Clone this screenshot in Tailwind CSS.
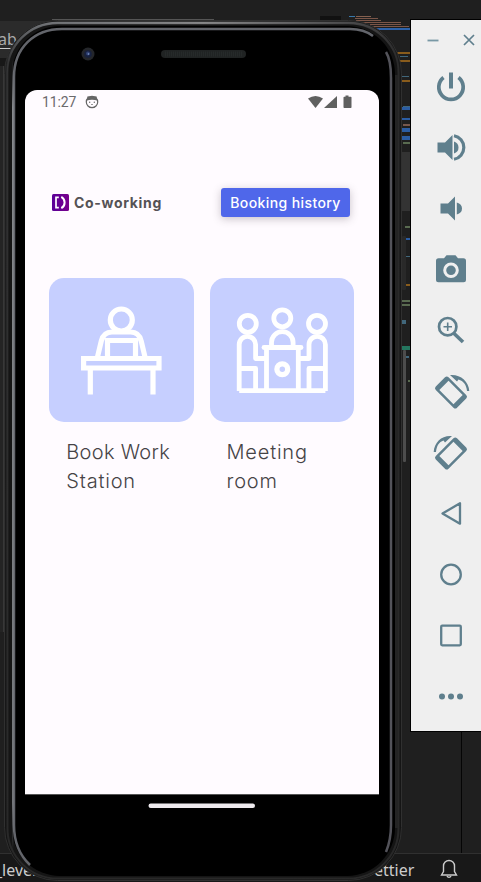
<!DOCTYPE html>
<html lang="en">
<head>
<meta charset="utf-8">
<meta name="viewport" content="width=device-width">
<title>Co-working</title>
<script src="https://cdn.jsdelivr.net/npm/@tailwindcss/browser@4"></script>
</head>
<body class="bg-[#1f1f1f]">
<main class="relative h-[882px] w-[481px] overflow-hidden bg-[#1f1f1f] font-['Inter',sans-serif]">

  <!-- editor behind the emulator -->
  <svg class="absolute inset-0" width="481" height="882" viewBox="0 0 481 882" shape-rendering="crispEdges">
    <rect y="21" width="60" height="37" fill="#2b2b2b"/>
    <rect y="58" width="12" height="8" fill="#181818"/>
    <rect y="66" width="4" height="566" fill="#242424"/>
    <rect x="3" y="66" width="1" height="566" fill="#383838"/>
    <rect x="52" y="19" width="162" height="1" fill="#555"/>
    <rect x="320" y="16" width="21" height="5" fill="#111"/>
    <rect x="349" y="16" width="6" height="1" fill="#3977a8"/><rect x="356" y="16" width="15" height="1" fill="#85604f"/>
    <g fill="#7b5648"><rect x="355" y="18" width="23" height="1"/><rect x="356" y="20" width="25" height="1"/><rect x="362" y="22" width="39" height="1"/><rect x="370" y="24" width="31" height="1"/><rect x="372" y="26" width="37" height="1"/></g>
    <rect x="374" y="28" width="36" height="2" fill="#2d63ab"/>
    <g fill="#895c1c"><rect x="396" y="52" width="14" height="2"/><rect x="398" y="60" width="12" height="2"/><rect x="400" y="80" width="10" height="2"/><rect x="406" y="284" width="4" height="2"/></g>
    <g fill="#41677b"><rect x="400" y="56" width="8" height="1"/><rect x="401" y="76" width="8" height="1"/><rect x="403" y="106" width="7" height="1"/><rect x="406" y="256" width="4" height="1"/><rect x="402" y="320" width="4" height="4"/><rect x="406" y="356" width="3" height="2"/></g>
    <g fill="#2b5da3"><rect x="402" y="107" width="8" height="3"/><rect x="402" y="118" width="8" height="2"/><rect x="402" y="128" width="8" height="4"/><rect x="402" y="136" width="8" height="4"/><rect x="406" y="238" width="4" height="2"/></g>
    <rect x="403" y="124" width="7" height="2" fill="#77584d"/>
    <rect x="402" y="152" width="8" height="59" fill="#333"/>
    <g fill="#596b50"><rect x="403" y="142" width="7" height="2"/><rect x="405" y="226" width="5" height="2"/><rect x="402" y="300" width="8" height="2"/><rect x="402" y="304" width="8" height="2"/><rect x="408" y="380" width="2" height="2"/></g>
    <rect x="402" y="346" width="8" height="4" fill="#24765f"/>
    <rect x="461" y="731" width="1" height="123" fill="#050505"/>
    <rect y="853" width="481" height="29" fill="#181818"/><rect y="853" width="481" height="1" fill="#303030"/>
    <rect y="48" width="14" height="1" fill="#ccc"/>
  </svg>
  <span class="absolute left-[-2px] top-[28px] font-['Noto_Sans',sans-serif] text-[16px] leading-[22px] text-[#aaa]">ab</span>
  <span class="absolute left-[-5px] top-[859px] font-['Noto_Sans',sans-serif] text-[16px] leading-[22px] text-[#ccc]">_level</span>
  <span class="absolute left-[358px] top-[859px] font-['Noto_Sans',sans-serif] text-[16px] leading-[22px] text-[#ccc]">Prettier</span>
  <svg class="absolute left-[440px] top-[858px]" width="18" height="22" viewBox="0 0 18 22" fill="none" stroke="#ccc" stroke-width="1.4"><path d="M1.5 17 3.5 13.5V8a5.5 5.5 0 0 1 11 0v5.500L16.500 17Z"/><path d="M7 18a2.200 2.200 0 0 0 4 0"/></svg>

  <!-- handset -->
  <section class="absolute left-0 top-0 h-[882px] w-[408px]">
    <svg class="absolute inset-0" width="408" height="882" viewBox="0 0 408 882" fill="none">
      <defs>
        <linearGradient id="rim" x1="0" y1="0" x2="1" y2="0"><stop offset="0" stop-color="#8a8e94"/><stop offset=".5" stop-color="#b4b4b6"/><stop offset="1" stop-color="#3c3c3e"/></linearGradient>
        <linearGradient id="fade" x1="0" y1="0" x2="0" y2="1"><stop offset="0" stop-color="#fff"/><stop offset=".07" stop-color="#222"/><stop offset="1" stop-color="#000"/></linearGradient>
        <linearGradient id="edge" gradientUnits="userSpaceOnUse" x1="0" y1="60" x2="0" y2="850"><stop offset="0" stop-color="#a2a5a9" stop-opacity="0"/><stop offset=".06" stop-color="#a2a5a9"/><stop offset=".94" stop-color="#8a8d91"/><stop offset="1" stop-color="#8a8d91" stop-opacity="0"/></linearGradient>
        <mask id="top"><rect width="408" height="882" fill="url(#fade)"/></mask>
      </defs>
      <rect x="402" y="236" width="4" height="54" rx="1" fill="#292929"/>
      <rect x="403" y="350" width="3" height="112" rx="1" fill="#4d4d4d"/>
      <rect x="4.500" y="20.500" width="397" height="860" rx="53" fill="#151515" stroke="#303030"/>
      <rect x="7.500" y="22.500" width="391" height="856" rx="50" stroke="#292929" stroke-width="2"/>
      <rect x="6.500" y="23" width="393" height="856" rx="51" stroke="url(#rim)" stroke-width="2.500" mask="url(#top)"/>
      <rect x="12" y="26" width="383" height="850" rx="48" fill="#000"/>
      <path d="M373 36Q364 29 350 29H62C34 29 14 48 14 77V825Q14 850 30 865" stroke="#63656b" stroke-width="2.500"/>
      <path d="M12.800 60V850" stroke="url(#edge)" stroke-width="1.200"/>
      <path d="M386 52Q391 60 391 78V825Q391 840 386 852" stroke="#53535a" stroke-width="2.500"/>
      <path d="M396.500 75V828" stroke="#242424" stroke-width="3"/>
      <circle cx="88" cy="54" r="6.500" fill="#24262a"/><circle cx="88" cy="54" r="3.800" fill="#17213f"/><circle cx="88" cy="53.500" r="2" fill="#304173"/><circle cx="88.500" cy="54" r=".8" fill="#87a1d0"/>
      <rect x="161" y="50" width="85" height="8" rx="4" fill="#202323"/><path d="M165 54H242" stroke="#262a2a" stroke-width="5" stroke-dasharray="1 1"/>
      <rect x="148.500" y="803.500" width="106.500" height="4.500" rx="2.200" fill="#eeeaee"/>
    </svg>

    <div class="absolute left-[25px] top-[90px] flex h-[705px] w-[354px] flex-col rounded-t-[12px] border-b border-[#555] bg-[#fffbff]">
      <header class="flex h-[24px] items-center pl-[17px] pr-[27px] text-[#6c6a6c]">
        <time class="font-['Roboto',sans-serif] text-[14px] tracking-[-0.1px]">11:27</time>
        <svg class="ml-[9px]" width="14" height="14" viewBox="0 0 14 14"><circle cx="7" cy="7" r="5.700" fill="none" stroke="#666" stroke-width="1.200"/><path d="M1.500 5.500 2.600 1.200 5 1.500Q7 .5 9 1.500L11.400 1.200l1.100 4.300Q7 4 1.500 5.500Z" fill="#666"/><circle cx="4.700" cy="7.200" r=".7" fill="#666"/><circle cx="9.300" cy="7.200" r=".7" fill="#666"/><path d="M6 9.500h2" stroke="#999"/></svg>
        <svg class="ml-auto" width="44" height="14" viewBox="0 0 44 14" fill="#606060"><path d="M0 3.500Q7.500-1.500 15 3.500L7.500 13Z"/><path d="M16 13 29 1V13Z"/><path d="M37.500 .5h3v1.300h2.300q.7 0 .7.700V12.300q0 .7-.7.700H36.200q-.7 0-.7-.7V2.500q0-.7.7-.7h1.300Z"/></svg>
      </header>

      <div class="mt-[74px] flex h-[29px] items-center pl-[27px] pr-[29px]">
        <svg width="17" height="17" viewBox="0 0 17 17"><defs><linearGradient id="logo" x2="1"><stop stop-color="#5a0098"/><stop offset="1" stop-color="#78008c"/></linearGradient></defs><rect width="17" height="17" rx="1.500" fill="url(#logo)"/><path d="M6.800 3.300H4V13.700H6.800" fill="none" stroke="#fff" stroke-width="1.700"/><path d="M9.300 2.800Q12.600 4.500 12.600 8.500T9.300 14.200" fill="none" stroke="#fff" stroke-width="2"/></svg>
        <h1 class="ml-[5px] whitespace-nowrap text-[14px] font-bold leading-[20px] tracking-[0.68px] text-[#555255]">Co-working</h1>
        <button class="ml-auto h-[29px] w-[129px] whitespace-nowrap rounded-[3px] bg-[#4f67ea] text-[14px] font-medium tracking-[0.4px] text-white shadow-[0_2px_9px_rgba(60,50,60,0.28)]">Booking history</button>
      </div>

      <div class="mt-[60.5px] grid grid-cols-2 gap-[15.5px] pl-[24.3px] pr-[24.7px]">
        <article>
          <div class="h-[144.500px] w-[144.500px] rounded-[15px] bg-[#c6cfff]">
            <svg width="145" height="145" viewBox="0 0 145 145" fill="none" stroke="#fff" stroke-width="5.200"><circle cx="72.300" cy="42" r="11"/><path d="M48.500 79 52.300 63Q54.500 54 63 54H81.600Q90 54 92.200 63L96 79M58.500 79V62.500H86.500V79"/><path d="M34.600 80.500H110V90H34.600ZM41.300 90V116.500M104 90V116.500"/></svg>
          </div>
          <h2 class="ml-[17px] mt-[16px] whitespace-nowrap text-[20px] font-[340] leading-[28.500px] text-[#464346]"><span class="tracking-[0.3px]">Book Work</span><br><span class="tracking-[0.8px]">Station</span></h2>
        </article>
        <article>
          <div class="h-[144.500px] w-[144.500px] rounded-[15px] bg-[#c6cfff]">
            <svg width="145" height="145" viewBox="0 0 145 145" fill="none" stroke="#fff" stroke-width="4.800" stroke-linejoin="round"><circle cx="37.800" cy="45.800" r="8.500"/><circle cx="72.300" cy="40.300" r="8.500"/><circle cx="107" cy="45.800" r="8.500"/><path d="M29.200 113V66.500A8.200 8.200 0 0 1 45.600 66.500V80.500H56M29.200 90.500H45.600V113M115.400 113V66.500A8.200 8.200 0 0 0 99 66.500V80.500H88M115.400 90.500H99V113M29.200 112.700H115.400M56.500 71V113M88.300 71V113"/><path d="M54 69.500H91" stroke-linecap="round"/><path d="M61.500 69V64.500A10.800 10.800 0 0 1 83.100 64.500V69"/><circle cx="72.300" cy="91.200" r="5.400" stroke-width="5.300"/></svg>
          </div>
          <h2 class="ml-[17px] mt-[16px] whitespace-nowrap text-[20px] font-[340] leading-[28.500px] text-[#464346]"><span class="tracking-[0.8px]">Meeting</span><br><span class="tracking-[0.8px]">room</span></h2>
        </article>
      </div>
    </div>
  </section>

  <!-- emulator controls -->
  <aside class="absolute left-[410px] top-[19px] h-[713px] w-[81px] border border-r-0 border-black bg-[#efefef] text-[#5f7f8d]">
    <div class="flex h-[35.500px] pl-[16px] pt-[14px]">
      <svg width="12" height="12" viewBox="0 0 12 12"><path d="M.5 6.500h11" stroke="#7898a5" stroke-width="1.800"/></svg>
      <svg class="ml-[24px]" width="12" height="12" viewBox="0 0 12 12"><path d="m1 1 10 10M11 1 1 11" stroke="currentColor" stroke-width="1.700"/></svg>
    </div>
    <nav class="flex flex-col items-center [&>svg]:h-[61px] [&>svg]:w-[40px]">
      <svg viewBox="0 0 40 61" fill="none" stroke="currentColor" stroke-width="3.700"><path d="M12.500 21.500A12.200 12.200 0 1 0 27.500 21.500"/><path d="M20 16.500V32.500" stroke-width="4"/></svg>
      <svg viewBox="0 0 40 61" fill="currentColor"><path d="M6.500 25.500H14L21.500 18V43L14 35.500H6.500ZM23 24.500Q27.500 26 27.500 30.500T23 36.500Z"/><path d="M23 18.700A12 12 0 0 1 23 42.300" fill="none" stroke="currentColor" stroke-width="3.200"/></svg>
      <svg viewBox="0 0 40 61" fill="currentColor"><path d="M9.500 25.500H17L24 18.500V42.500L17 35.500H9.500ZM25.800 24.500Q31 26 31 30.500T25.800 36.500Z"/></svg>
      <svg viewBox="0 0 40 61"><path fill="currentColor" d="M7.500 19.300H13L15.500 16.300H24.500L27 19.300H32.500Q35 19.300 35 21.800V40.800Q35 43.300 32.500 43.300H7.500Q5 43.300 5 40.800V21.800Q5 19.300 7.500 19.300Z"/><circle cx="20" cy="31.300" r="6.300" fill="none" stroke="#efefef" stroke-width="3"/></svg>
      <svg viewBox="0 0 40 61" fill="none" stroke="currentColor" stroke-width="2.700"><circle cx="16.700" cy="26.700" r="8.700"/><path d="M12.500 26.700h8.500M16.700 22.500v8.500" stroke-width="1.600"/><path d="M22.500 33 32 42" stroke-width="3.600"/></svg>
      <svg viewBox="0 0 40 61" fill="currentColor"><path fill-rule="evenodd" transform="translate(20 31.500) rotate(45)" d="M-12.500-9H12.500Q15-9 15-6.500V6.500Q15 9 12.500 9H-12.500Q-15 9-15 6.500V-6.500Q-15-9-12.500-9ZM-10-6.500V6.500H10V-6.500Z"/><path d="M19 14C29 13 37.800 20 38.300 30H36C35.500 24 32.500 20 27.500 18.500L26 20.500Z"/></svg>
      <svg viewBox="0 0 40 61" fill="currentColor"><g transform="matrix(-1 0 0 1 40 0)"><path fill-rule="evenodd" transform="translate(20 31.500) rotate(45)" d="M-12.500-9H12.500Q15-9 15-6.500V6.500Q15 9 12.500 9H-12.500Q-15 9-15 6.500V-6.500Q-15-9-12.500-9ZM-10-6.500V6.500H10V-6.500Z"/><path d="M19 14C29 13 36.800 20 37.300 30H35C34.500 24 32 20 27.500 18.500L26 20.500Z"/></g></svg>
      <svg viewBox="0 0 40 61" fill="none" stroke="currentColor" stroke-width="2.300" stroke-linejoin="round"><path d="M11.500 30.500 29 20.300V40.700Z"/></svg>
      <svg viewBox="0 0 40 61" fill="none" stroke="currentColor" stroke-width="2.300"><circle cx="20" cy="30.500" r="9.800"/></svg>
      <svg viewBox="0 0 40 61" fill="none" stroke="currentColor" stroke-width="2.300"><rect x="10.200" y="20.700" width="19.600" height="19.600" rx="1"/></svg>
      <svg viewBox="0 0 40 61" fill="currentColor"><circle cx="11" cy="30.500" r="3"/><circle cx="20" cy="30.500" r="3"/><circle cx="29" cy="30.500" r="3"/></svg>
    </nav>
  </aside>
</main>
</body>
</html>
